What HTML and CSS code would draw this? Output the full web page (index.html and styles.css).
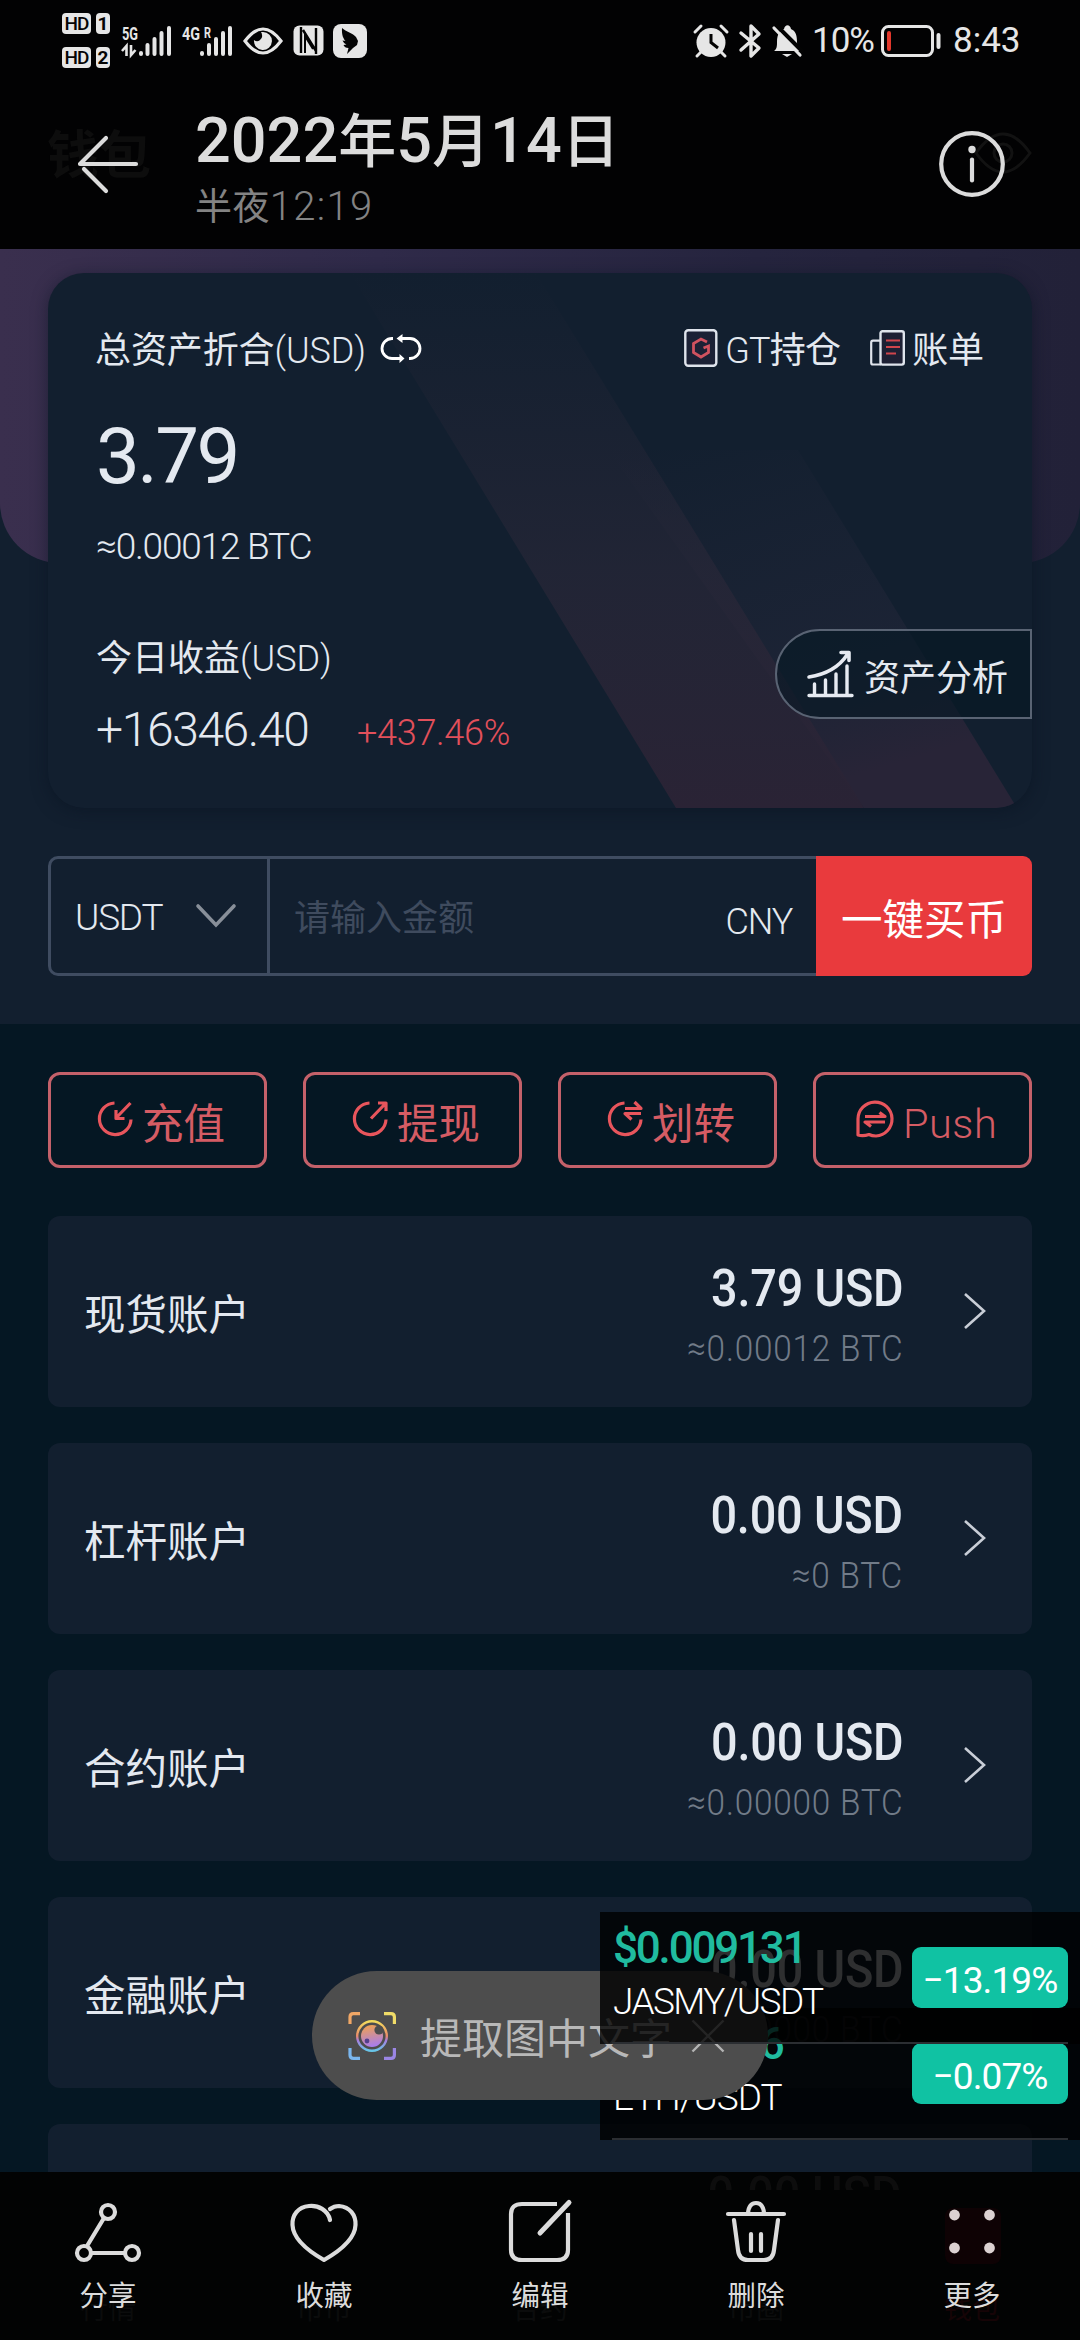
FILE: index.html
```html
<!DOCTYPE html>
<html lang="zh-CN">
<head>
<meta charset="utf-8">
<title>钱包</title>
<link rel="stylesheet" href="styles.css">
</head>
<body>
<div class="screen">
  <header class="viewer-head">
    <div class="status">
      <div class="hd-stack">
        <div class="hd"><span class="hd-tag">HD</span><span class="hd-num">1</span></div>
        <div class="hd"><span class="hd-tag">HD</span><span class="hd-num">2</span></div>
      </div>
      <svg class="sig-one" width="50" height="32" viewBox="0 0 50 32">
        <text class="net" x="0" y="15" textLength="16" lengthAdjust="spacingAndGlyphs">5G</text>
        <g stroke="#e6e6e6" stroke-width="4" stroke-linecap="round"><path d="M19 28v1M25.500 20v9M32.500 14v15M39.500 8v21M47 3v26"/></g>
        <path d="M0 26l4.500-5v10M9 20v10l4.500-5" fill="none" stroke="#e6e6e6" stroke-width="2.600"/>
      </svg>
      <svg class="sig-two" width="52" height="32" viewBox="0 0 52 32">
        <text class="net" x="0" y="15" textLength="18" lengthAdjust="spacingAndGlyphs">4G</text>
        <text class="net net-r" x="22" y="13" textLength="7" lengthAdjust="spacingAndGlyphs">R</text>
        <g stroke="#e6e6e6" stroke-width="4" stroke-linecap="round"><path d="M20 28v1M27 20v9M34 14v15M41 8v21M48 3v26"/></g>
      </svg>
      <svg class="st-eye" width="40" height="28" viewBox="0 0 40 28">
        <path d="M2 14Q20-10 38 14Q20 38 2 14Z" fill="none" stroke="#e6e6e6" stroke-width="3.200"/>
        <path d="M20 5a9 9 0 1 1-9 8a5 5 0 0 0 8-5a5 5 0 0 0-1-3z" fill="#e6e6e6"/>
      </svg>
      <svg class="st-nfc" width="31" height="31" viewBox="0 0 31 31">
        <rect x=".5" y=".5" width="30" height="30" rx="6" fill="#e6e6e6"/>
        <path d="M8 2v26M10 5l13 21M23 3v26" fill="none" stroke="#030303" stroke-width="2.400"/><path d="M12 28V11l8 13" fill="none" stroke="#030303" stroke-width="2"/>
      </svg>
      <svg class="st-bird" width="34" height="34" viewBox="0 0 34 34">
        <rect width="34" height="34" rx="8" fill="#e6e6e6"/>
        <path d="M9 4c4 4 11 5 14 9l2 4l-1 4l-4 3l-6 6l1.500-6c-3 0-4-1-5-3l3-.5c-2-1-3-2-4-4l3 .5c-2-2-4-6-3.500-13z" fill="#050505"/>
      </svg>
      <div class="status-right">
        <svg width="34" height="32" viewBox="0 0 34 32"><circle cx="17" cy="17.500" r="14.500" fill="#e6e6e6"/><path d="M1 7l6-6M33 7l-6-6M7 27l-4 4M27 27l4 4" stroke="#e6e6e6" stroke-width="3" stroke-linecap="round"/><path d="M17 9v8.500l7 5.500" fill="none" stroke="#030303" stroke-width="3"/></svg>
        <svg class="bt" width="22" height="34" viewBox="0 0 22 34"><path d="M2 9l18 15l-8 8V2l8 8L2 26" fill="none" stroke="#e6e6e6" stroke-width="3.400" stroke-linejoin="round" stroke-linecap="round"/></svg>
        <svg class="bell" width="30" height="34" viewBox="0 0 30 34"><path d="M2 27c3-2 3-5 3-9c0-8 3-12 7-13c1-5 6-5 7 0c5 2 6 7 6 13c0 4 1 7 3 9z" fill="#e6e6e6"/><path d="M10 30h10l-5 3z" fill="#e6e6e6"/><path d="M4 1l27 27" stroke="#030303" stroke-width="4"/><path d="M2 4l26 27" stroke="#e6e6e6" stroke-width="3.200" stroke-linecap="round"/></svg>
        <span class="pct">10%</span>
        <svg class="batt" width="60" height="32" viewBox="0 0 60 32"><rect x="1.500" y="1.500" width="50" height="29" rx="6" fill="none" stroke="#e6e6e6" stroke-width="3"/><rect x="6" y="6" width="4" height="20" rx="2" fill="#e2382c"/><rect x="55.500" y="8" width="4" height="16" rx="2" fill="#e6e6e6"/></svg>
        <span class="clock">8:43</span>
      </div>
    </div>
    <div class="title-row">
      <span class="ghost-title">钱包</span>
      <svg class="back" width="64" height="60" viewBox="0 0 64 60"><path d="M60 30H4L30 4M8 35l22 22" fill="none" stroke="#dcdcdc" stroke-width="4.200" stroke-linecap="round" stroke-linejoin="round"/></svg>
      <div class="titles">
        <div class="date">2022<b>年</b>5<b>月</b>14<b>日</b></div>
        <div class="time"><b>半夜</b>12:19</div>
      </div>
      <svg class="ghost-eye" width="60" height="44" viewBox="0 0 60 44"><path d="M3 22Q30-16 57 22Q30 60 3 22Z" fill="none" stroke="#121212" stroke-width="3"/><circle cx="30" cy="22" r="9" fill="none" stroke="#121212" stroke-width="3"/></svg>
      <svg class="info" width="66" height="66" viewBox="0 0 66 66"><circle cx="33" cy="33" r="30.800" fill="none" stroke="#dcdcdc" stroke-width="4.200"/><circle cx="33" cy="18.500" r="3.700" fill="#dcdcdc"/><path d="M33 28.500v21" stroke="#dcdcdc" stroke-width="4.200" stroke-linecap="round"/></svg>
    </div>
  </header>

  <section class="assets">
    <div class="card">
      <svg class="rays" width="984" height="535" viewBox="0 0 984 535">
        <defs>
          <linearGradient id="rayA" x1="0" y1="0" x2="0" y2="1"><stop offset="0" stop-color="#2a2838" stop-opacity="0"/><stop offset=".55" stop-color="#2b2839" stop-opacity=".6"/><stop offset="1" stop-color="#2a2335"/></linearGradient>
          <linearGradient id="rayB" x1="0" y1="0" x2=".35" y2="1"><stop offset="0" stop-color="#222638" stop-opacity="0"/><stop offset=".7" stop-color="#1f2537" stop-opacity=".75"/><stop offset="1" stop-color="#282437"/></linearGradient>
        </defs>
        <path d="M560 177H750L969 535H816Z" fill="url(#rayB)"/>
        <path d="M302 0H488L816 535H628Z" fill="url(#rayA)"/>
      </svg>
      <div class="card-head">
        <span class="head-label"><b>总资产折合</b>(USD)</span>
        <svg class="swap" width="40" height="30" viewBox="0 0 40 30"><path d="M12 4.500H11a9.500 9.500 0 0 0 0 20h11M28 24.500h1a9.500 9.500 0 0 0 0-20H18" fill="none" stroke="#fff" stroke-width="2.800"/><path d="M15.500 4.500l6-4.500v9zM23.500 24.500l-5-4.500v9z" fill="#fff"/></svg>
        <div class="links">
          <svg width="34" height="38" viewBox="0 0 34 38"><rect x="1.300" y="1.300" width="31" height="35.400" rx="3" fill="#1b2135" stroke="#dfe4ec" stroke-width="2.400"/><path d="M23 13l-6-3l-7.500 4.500v9L17 28l7.500-4.500V17l-5 2" fill="none" stroke="#d0525f" stroke-width="2.800"/></svg>
          <span class="link-gt">GT<b>持仓</b></span>
          <svg width="35" height="36" viewBox="0 0 35 36"><path d="M11 34.500H3q-1.800 0-1.800-1.800V12.500q0-1.800 1.800-1.800H11" fill="none" stroke="#dfe4ec" stroke-width="2.200"/><rect x="10.500" y="1.200" width="23.300" height="33.400" rx="2" fill="#1d2034" stroke="#dfe4ec" stroke-width="2.400"/><path d="M16 10.500h14M16 17h14M16 23.500h10" stroke="#d0454c" stroke-width="2.200"/></svg>
          <span class="link-bill"><b>账单</b></span>
        </div>
      </div>
      <div class="total">3.79</div>
      <div class="total-btc">≈0.00012 BTC</div>
      <div class="card-foot">
        <div class="today">
          <div class="today-label"><b>今日收益</b>(USD)</div>
          <div class="today-row"><span class="gain">+16346.40</span><span class="rate">+437.46%</span></div>
        </div>
        <div class="analyse">
          <svg width="47" height="48" viewBox="0 0 47 48"><path d="M2 45.500h43M7.500 44V34M18.500 44V30M29 44V24M40 44V16" stroke="#e6eaf1" stroke-width="3.400" stroke-linecap="round"/><path d="M2 27Q28 23 40 5M34 2.500h8v8" fill="none" stroke="#e6eaf1" stroke-width="3.600" stroke-linecap="round" stroke-linejoin="round"/></svg>
          <span>资产分析</span>
        </div>
      </div>
    </div>
    <div class="buy">
      <div class="coin"><span>USDT</span><svg width="42" height="26" viewBox="0 0 42 26"><path d="M3 3l18 19L39 3" fill="none" stroke="#888f99" stroke-width="3.600" stroke-linecap="round"/></svg></div>
      <div class="amount"><span class="hint">请输入金额</span><span class="cny">CNY</span></div>
      <div class="buy-btn">一键买币</div>
    </div>
  </section>

  <main class="body">
    <div class="actions">
      <div class="action"><svg width="36" height="38" viewBox="0 0 36 38"><path d="M17.500 3a15.800 15.800 0 1 0 16.500 16.500" /><path d="M33.500 3L19.500 17.500M19 10v8.500h8.500"/></svg><span>充值</span></div>
      <div class="action"><svg width="36" height="38" viewBox="0 0 36 38"><path d="M17.500 3a15.800 15.800 0 1 0 16.500 16.500"/><path d="M19 18.500L33.500 3.500M26 3h8v8"/></svg><span>提现</span></div>
      <div class="action"><svg width="36" height="38" viewBox="0 0 36 38"><path d="M17.500 3a15.800 15.800 0 1 0 16.500 16.500"/><path d="M18 8.500h16L27.500 2M34 13.500H18l6.500 6"/></svg><span>划转</span></div>
      <div class="action"><svg class="push-ic" width="38" height="38" viewBox="0 0 38 38"><path d="M2 35V19A17 17 0 1 1 20 36q-4 0-7-1.500Q7 36.500 2 35Z"/><path d="M9 16.500h20l-5.500-4M29 22H9l6 4.500"/></svg><span class="push">Push</span></div>
    </div>
    <div class="accounts">
      <div class="account"><span class="name">现货账户</span><div class="vals"><div class="usd">3.79 USD</div><div class="btc">≈0.00012 BTC</div></div><svg class="go" width="24" height="38" viewBox="0 0 24 38"><path d="M2 2l19 17L2 36"/></svg></div>
      <div class="account"><span class="name">杠杆账户</span><div class="vals"><div class="usd">0.00 USD</div><div class="btc">≈0 BTC</div></div><svg class="go" width="24" height="38" viewBox="0 0 24 38"><path d="M2 2l19 17L2 36"/></svg></div>
      <div class="account"><span class="name">合约账户</span><div class="vals"><div class="usd">0.00 USD</div><div class="btc">≈0.00000 BTC</div></div><svg class="go" width="24" height="38" viewBox="0 0 24 38"><path d="M2 2l19 17L2 36"/></svg></div>
      <div class="account"><span class="name">金融账户</span><div class="vals"><div class="usd">0.00 USD</div><div class="btc">≈0.00000 BTC</div></div></div>
      <div class="account"></div>
    </div>
  </main>

  <div class="ticker ticker-eth">
    <div class="pair"><div class="price">$2061.86</div><div class="sym">ETH/USDT</div></div>
    <div class="chg">−0.07%</div>
  </div>
  <div class="extract">
    <svg width="48" height="48" viewBox="0 0 48 48">
      <defs><linearGradient id="lens" x1="0" y1="0" x2="0" y2="1"><stop offset="0" stop-color="#f3dc5c"/><stop offset=".5" stop-color="#e98a6a"/><stop offset=".65" stop-color="#a67ee0"/><stop offset="1" stop-color="#67c6e8"/></linearGradient><linearGradient id="iris" x1=".3" y1="0" x2=".5" y2="1"><stop offset="0" stop-color="#f0a050"/><stop offset="1" stop-color="#a77cf0"/></linearGradient></defs>
      <g fill="none" stroke-width="3.200"><path d="M2 12V5q0-3.400 3.400-3.400H12" stroke="#f0a766"/><path d="M36 1.600h7q3.400 0 3.400 3.400v7" stroke="#f0dc68"/><path d="M2 36v7q0 3.400 3.400 3.400H12" stroke="#7ab6ee"/><path d="M36 46.400h7q3.400 0 3.400-3.400V36" stroke="#9b86e4"/><circle cx="24" cy="24" r="14.800" stroke="url(#lens)" stroke-width="2.400"/></g>
      <circle cx="24" cy="24" r="11" fill="url(#iris)"/><circle cx="31" cy="18" r="4.600" fill="#4d4d4d"/><circle cx="19" cy="29" r="2.400" fill="#54408c"/>
    </svg>
    <span>提取图中文字</span>
    <svg class="close" width="34" height="34" viewBox="0 0 34 34"><path d="M1.500 1.500l31 31M32.500 1.500l-31 31" stroke="#b4b4b4" stroke-width="2.400"/></svg>
  </div>
  <div class="ticker ticker-jasmy">
    <div class="pair"><div class="price">$0.009131</div><div class="sym sym-long">JASMY/USDT</div></div>
    <div class="chg">−13.19%</div>
  </div>

  <footer class="tools">
    <div class="ghost-amount">0.00 USD</div>
    <div class="ghost-nav"><span>行情</span><span>币币</span><span>合约</span><span>币圈</span><span class="on">钱包</span></div>
    <div class="tool"><svg width="68" height="64" viewBox="0 0 68 64"><g fill="none" stroke="#dcdcdc" stroke-width="4.200"><circle cx="34" cy="12" r="7"/><circle cx="10" cy="53" r="7"/><circle cx="58" cy="53" r="7"/><path d="M30 18L13 46M17 53h34"/></g></svg><span>分享</span></div>
    <div class="tool"><svg width="68" height="64" viewBox="0 0 68 64"><path d="M40 20C38 10 28 5 19 6C8 7 2 15 2.500 25C3 39 20 52 34 60C48 52 65 39 65.500 25C66 15 60 7 49 6Q44 6 40 9" fill="none" stroke="#dcdcdc" stroke-width="4.200" stroke-linecap="round" stroke-linejoin="round"/></svg><span>收藏</span></div>
    <div class="tool"><svg width="68" height="64" viewBox="0 0 68 64"><path d="M51 4H16Q5 4 5 14V50Q5 60 16 60H51Q62 60 62 50V13" fill="none" stroke="#dcdcdc" stroke-width="4.200"/><path d="M63 2.500L34 33" stroke="#dcdcdc" stroke-width="5" stroke-linecap="round"/></svg><span>编辑</span></div>
    <div class="tool"><svg width="68" height="64" viewBox="0 0 68 64"><path d="M6 14H62M26 13Q27 3 34 3T42 13M12 20L16 50Q17 60 26 60H42Q51 60 52 50L56 20M29 34V51M39 34V51" fill="none" stroke="#dcdcdc" stroke-width="4.200" stroke-linecap="round"/></svg><span>删除</span></div>
    <div class="tool"><svg width="68" height="64" viewBox="0 0 68 64"><rect x="7" y="8" width="56" height="56" rx="8" fill="#0e0204"/><g fill="#dcd2d2"><circle cx="16.500" cy="15" r="5.400"/><circle cx="51.500" cy="15" r="5.400"/><circle cx="16.500" cy="48" r="5.400"/><circle cx="51.500" cy="48" r="5.400"/></g></svg><span>更多</span></div>
  </footer>
</div>
</body>
</html>
```
FILE: styles.css
```css
* { box-sizing: border-box; margin: 0; padding: 0; }
body {
  width: 1080px;
  height: 2340px;
  overflow: hidden;
  background: #051723;
  color: #e4e9f0;
  font-family: Roboto, "Noto Sans CJK SC", sans-serif;
  font-size: 36px;
  white-space: nowrap;
}
svg { display: block; flex: none; overflow: visible; }
b { font-weight: 400; }
.screen { position: relative; width: 1080px; height: 2340px; overflow: hidden; display: flex; flex-direction: column; }

/* viewer header */
.viewer-head { height: 249px; flex: none; background: #020203; }
.status { height: 81px; padding-left: 62px; display: flex; align-items: center; color: #e6e6e6; }
.hd-stack { display: flex; flex-direction: column; gap: 13px; width: 60px; }
.hd { display: flex; gap: 5px; height: 21px; }
.hd-tag, .hd-num { background: #e6e6e6; color: #050505; border-radius: 4px; font-size: 19px; line-height: 21px; font-weight: 500; text-align: center; }
.hd-tag { width: 29px; letter-spacing: -1px; }
.hd-num { width: 14px; font-weight: 700; }
.net { font-size: 19px; font-weight: 700; fill: #e6e6e6; }
.net-r { font-size: 15px; }
.sig-two { margin-left: 10px; }
.st-eye { margin-left: 9px; }
.st-nfc { margin-left: 10px; }
.st-bird { margin-left: 9px; }
.status-right { display: flex; align-items: center; margin-left: auto; padding-right: 61px; font-size: 35px; line-height: 40px; }
.bt { margin-left: 11px; }
.bell { margin-left: 11px; }
.pct { width: 70px; margin-left: 10px; letter-spacing: -1px; }
.batt { margin-left: -1px; }
.clock { margin-left: 11px; width: 67px; padding-left: 1px; }
.title-row { position: relative; display: flex; padding: 0 75px 0 76px; height: 168px; }
.back { position: relative; margin-top: 53px; }
.titles { margin-left: 55px; }
.date { margin-top: 25px; line-height: 70px; font-size: 63px; font-weight: 500; color: #dcdcdc; }
.date b { font-size: 58px; font-weight: 500; }
.time { margin-top: 10px; line-height: 40px; font-size: 40px; font-weight: 300; color: #838383; letter-spacing: 1.3px; }
.time b { font-size: 37px; letter-spacing: 0.4px; }
.info { position: relative; margin: 50px 0 0 auto; }
.ghost-title { position: absolute; left: 47px; top: 48px; font-size: 52px; line-height: 56px; font-weight: 700; color: #0d0d0d; }
.ghost-eye { position: absolute; left: 973px; top: 50px; }

/* total assets */
.assets { position: relative; height: 775px; flex: none; padding: 24px 48px 0; background: #121f2f; }
.assets::before {
  content: "";
  position: absolute;
  left: 0; top: 0; right: 0;
  height: 314px;
  border-radius: 0 0 60px 60px;
  background: linear-gradient(90deg, #3a2f4e 0%, #2f2a49 35%, #25243e 70%, #222138 100%);
}
.card { position: relative; height: 535px; padding: 52px 0 0 49px; border-radius: 36px; background: #121f2f; box-shadow: 0 3px 16px rgba(8, 18, 32, 0.5); overflow: hidden; }
.rays { position: absolute; left: 0; top: 0; }
.card-head, .total, .total-btc, .card-foot { position: relative; }
.card-head { display: flex; align-items: center; height: 52px; line-height: 52px; padding-right: 48px; letter-spacing: -0.1px; font-weight: 300; }
.head-label { margin-left: -2px; }
.swap { margin-left: 15px; margin-top: -4px; }
.links { display: flex; align-items: center; margin-left: auto; }
.links svg { margin-top: -7px; }
.link-gt { margin: 0 30px 0 7px; letter-spacing: -0.8px; }
.link-bill { margin-left: 7px; }
.total { margin-top: 40px; line-height: 80px; font-size: 78px; letter-spacing: -2.6px; margin-left: -1px; }
.total-btc { margin-top: 28px; line-height: 44px; font-size: 37px; letter-spacing: -1.2px; font-weight: 300; margin-left: -1px; }
.card-foot { margin-top: 60px; display: flex; justify-content: space-between; }
.today { padding-top: 7px; }
.today-label { line-height: 46px; font-weight: 300; margin-left: -1px; }
.today-row { display: flex; margin-top: 18px; line-height: 60px; }
.gain { width: 261px; font-size: 48px; letter-spacing: -1.4px; font-weight: 300; margin-left: -1px; }
.rate { padding-top: 3px; font-size: 36px; letter-spacing: -0.3px; color: #e2505b; font-weight: 300; }
.analyse { display: flex; align-items: center; width: 257px; height: 90px; padding-left: 30px; gap: 10px; border: 2px solid #596373; border-radius: 45px 0 0 45px; background: rgba(5, 23, 35, 0.6); }
.analyse span { padding-top: 1px; }

.buy { position: relative; display: flex; height: 120px; margin-top: 48px; line-height: 114px; }
.coin { display: flex; align-items: center; width: 222px; padding-left: 24px; border: 3px solid #3f4c61; border-radius: 10px 0 0 10px; letter-spacing: -1.2px; font-weight: 300; font-size: 37px; }
.coin span { width: 119px; padding-top: 4px; }
.coin svg { margin-left: 1px; }
.amount { display: flex; justify-content: space-between; flex: 1; padding: 3px 24px 0 24px; border: solid #3f4c61; border-width: 3px 0; line-height: 114px; }
.hint { color: #3f4b5e; }
.cny { padding-top: 3px; letter-spacing: -1.2px; font-weight: 300; }
.buy-btn { width: 216px; border-radius: 0 9px 9px 0; background: #e93a3d; color: #fff; font-size: 41.500px; text-align: center; line-height: 130px; }

/* actions and accounts */
.body { padding: 48px 48px 0; }
.actions { display: grid; grid-template-columns: repeat(4, 219px); gap: 36px; }
.action { display: flex; align-items: center; height: 96px; padding-left: 46px; border: 3px solid #c4616a; border-radius: 12px; color: #d55c64; font-size: 41.500px; line-height: 90px; }
.action svg { margin-top: -2px; }
.action path { fill: none; stroke: #e8555c; stroke-width: 3.200; stroke-linejoin: round; }
.action span { margin-left: 9px; padding-top: 9px; }
.push-ic { margin-left: -6px; }
.action .push { padding-top: 8px; margin-left: 9px; font-weight: 300; letter-spacing: 0.5px; }
.accounts { display: grid; grid-auto-rows: 191px; gap: 36px; margin-top: 48px; }
.account { display: flex; padding: 0 45px 0 36px; border-radius: 12px; background: #121f2f; }
.name { font-size: 41.500px; line-height: 199px; }
.vals { margin-left: auto; padding-top: 43px; text-align: right; margin-right: 60px; transform: scaleX(0.9); transform-origin: right; }
.account .vals:last-child { margin-right: 84px; }
.usd { font-size: 52px; line-height: 60px; font-weight: 500; letter-spacing: -0.2px; }
.btc { margin-top: 8px; font-size: 37px; line-height: 44px; color: #717b88; letter-spacing: 0.9px; font-weight: 300; }
.go { margin-top: 76px; }
.go path { fill: none; stroke: #c9ced7; stroke-width: 2.600; }

/* floating layers */
.ticker { position: absolute; left: 600px; width: 480px; height: 132px; background: rgba(0, 0, 0, 0.8); display: flex; justify-content: space-between; padding: 0 12px; color: #fff; }
.ticker::after { content: ""; position: absolute; left: 12px; right: 12px; bottom: 0; height: 2px; background: #2b2e32; }
.ticker-jasmy { top: 1912px; }
.ticker-eth { top: 2008px; }
.price { padding-top: 10px; font-size: 44px; line-height: 52px; font-weight: 500; color: #20bb9f; letter-spacing: -2.2px; margin-left: 1px; }
.sym { margin-top: 3px; line-height: 50px; font-size: 37px; font-weight: 300; letter-spacing: -1px; margin-left: 1px; }
.sym-long { letter-spacing: -1.6px; }
.chg { width: 156px; height: 61px; margin-top: 35px; border-radius: 9px; background: #10c2a3; text-align: center; line-height: 67px; font-size: 37px; letter-spacing: -0.9px; }
.extract { position: absolute; left: 312px; top: 1971px; width: 456px; height: 129px; border-radius: 65px; background: #4d4d4d; display: flex; align-items: center; padding-left: 36px; color: #b8b8b8; font-size: 42px; }
.extract span { margin-left: 24px; margin-top: -1px; }
.close { margin-left: 19px; }

/* bottom tools */
.tools { position: absolute; left: 0; top: 2172px; width: 1080px; height: 168px; background: #020303; display: grid; grid-template-columns: repeat(5, 216px); }
.tool { position: relative; display: flex; flex-direction: column; align-items: center; padding-top: 28px; font-size: 28.500px; color: #dcdcdc; }
.tool span { margin-top: 13px; line-height: 40px; }
.ghost-amount { position: absolute; right: 179px; top: 0; height: 18px; overflow: hidden; font-size: 52px; line-height: 48px; font-weight: 500; color: #0d0d0d; transform: scaleX(0.9); transform-origin: right; }
.ghost-nav { position: absolute; inset: 118px 0 auto 0; display: grid; grid-template-columns: repeat(5, 216px); text-align: center; font-size: 28px; line-height: 40px; color: #0b0c0c; }
.ghost-nav .on { color: #160406; }
```
